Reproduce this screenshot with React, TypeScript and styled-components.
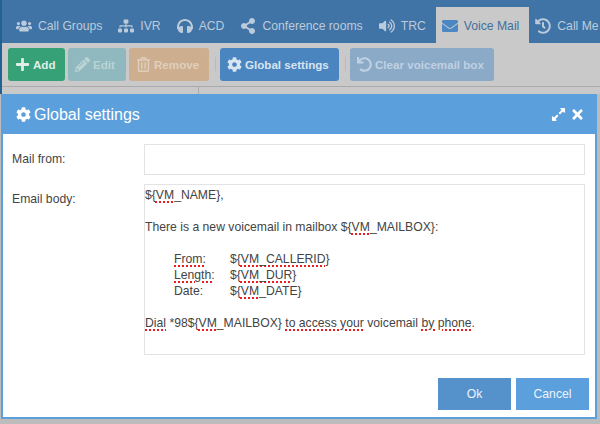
import React from "react";
import styled, { createGlobalStyle } from "styled-components";
import {
	FaUsers,
	FaSitemap,
	FaHeadphones,
	FaShareAlt,
	FaVolumeUp,
	FaEnvelope,
	FaHistory,
	FaPlus,
	FaPencilAlt,
	FaRegTrashAlt,
	FaCog,
	FaUndo,
	FaExpandAlt,
	FaTimes,
} from "react-icons/fa";

const GlobalStyle = createGlobalStyle`
	html, body {
		margin: 0;
		padding: 0;
		background: #bcbcbc;
		font-family: "Liberation Sans", Arial, sans-serif;
	}
`;

const Page = styled.div`
	position: relative;
	width: 600px;
	height: 424px;
	overflow: hidden;
	background: #bcbcbc;
`;

const Backdrop = styled.div`
	border-left: 2px solid #1f6293;
	background: #c9c9c9;
`;

const TabBar = styled.div`
	height: 43px;
	background: #4174a6;
	display: flex;
	align-items: flex-end;
	padding-left: 14px;
	box-sizing: border-box;
`;

const Tab = styled.div<{ $active?: boolean }>`
	height: 35px;
	display: flex;
	align-items: center;
	gap: 6px;
	padding: 1px 10px 0 ${(p) => (p.$active ? "6px" : "0")};
	margin-right: 6px;
	margin-left: ${(p) => (p.$active ? "-6px" : "0")};
	font-size: 12.2px;
	white-space: nowrap;
	background: ${(p) => (p.$active ? "#c9c9c9" : "transparent")};
	color: ${(p) => (p.$active ? "#40719f" : "#bccbdb")};
	svg {
		width: 16px;
		height: 16px;
		color: ${(p) => (p.$active ? "#4a87c3" : "#bccbdb")};
	}
`;

const LastTab = styled(Tab)`
	padding-right: 0;
	margin-right: 0;
`;

const Toolbar = styled.div`
	height: 44px;
	display: flex;
	align-items: flex-start;
	padding: 5px 0 0 6px;
	gap: 3px;
	box-sizing: border-box;
	border-bottom: 1px solid #aaaaaa;
`;

const ToolButton = styled.div<{ $bg: string; $fg: string; $w: number }>`
	width: ${(p) => p.$w}px;
	height: 33px;
	display: flex;
	align-items: center;
	gap: 3px;
	padding-left: 7px;
	border-radius: 3px;
	font-size: 11.6px;
	font-weight: bold;
	white-space: nowrap;
	box-sizing: border-box;
	background: ${(p) => p.$bg};
	color: ${(p) => p.$fg};
	svg {
		width: 15px;
		height: 15px;
	}
`;

const Separator = styled.div`
	width: 1px;
	height: 14px;
	margin: 9px 1px 0 3px;
	background: #bbbbbb;
`;

const TableHead = styled.div`
	height: 7px;
	width: 196px;
	border-right: 1px solid #aaaaaa;
`;

const Modal = styled.div`
	position: absolute;
	left: 1px;
	top: 94px;
	width: 596px;
	height: 325px;
	background: #ffffff;
	border: 2px solid #5b9fdc;
	border-top: 0;
	box-sizing: border-box;
	display: flex;
	flex-direction: column;
`;

const ModalHeader = styled.div`
	height: 40px;
	flex: none;
	background: #5b9fdc;
	color: #ffffff;
	display: flex;
	align-items: center;
	padding: 0 10px 0 13px;
	font-size: 16px;
	gap: 3px;
	svg {
		width: 15px;
		height: 15px;
	}
`;

const HeaderTitle = styled.div`
	flex: 1;
	padding-top: 1px;
`;

const HeaderActions = styled.div`
	display: flex;
	align-items: center;
	gap: 4px;
`;

const FormBody = styled.div`
	flex: 1;
	padding: 10px 10px 0 9px;
	display: grid;
	grid-template-columns: 132px 1fr;
	grid-template-rows: 31px 171px;
	row-gap: 9px;
`;

const FieldLabel = styled.label`
	padding-top: 8px;
	font-size: 12.2px;
	color: #444444;
`;

const Field = styled.div`
	border: 1px solid #e3e3e3;
	box-sizing: border-box;
	background: #ffffff;
`;

const BodyField = styled(Field)`
	padding: 2px 0 0 0;
	font-size: 12.2px;
	line-height: 16px;
	color: #444444;
`;

const Line = styled.div<{ $indent?: boolean }>`
	height: 16px;
	white-space: pre;
	padding-left: ${(p) => (p.$indent ? "29px" : "0")};
	display: flex;
`;

const Gap = styled.div`
	height: 16px;
`;

const Term = styled.span`
	width: 56px;
	flex: none;
`;

const Typo = styled.span`
	text-decoration: underline dotted #ee1c1c;
	text-decoration-thickness: 1.5px;
	text-underline-offset: 2px;
`;

const Footer = styled.div`
	flex: none;
	height: 39px;
	display: flex;
	justify-content: flex-end;
	gap: 5px;
	padding-right: 6px;
`;

const FootButton = styled.div<{ $bg: string }>`
	width: 73px;
	height: 32px;
	display: flex;
	align-items: center;
	justify-content: center;
	font-size: 12.2px;
	color: #eef4fb;
	background: ${(p) => p.$bg};
`;

const tabs = [
	{ icon: <FaUsers />, label: "Call Groups" },
	{ icon: <FaSitemap />, label: "IVR" },
	{ icon: <FaHeadphones />, label: "ACD" },
	{ icon: <FaShareAlt />, label: "Conference rooms" },
	{ icon: <FaVolumeUp />, label: "TRC" },
	{ icon: <FaEnvelope />, label: "Voice Mail", active: true },
];

export default function App() {
	return (
		<Page>
			<GlobalStyle />
			<Backdrop>
				<TabBar>
					{tabs.map((t) => (
						<Tab key={t.label} $active={t.active}>
							{t.icon}
							{t.label}
						</Tab>
					))}
					<LastTab>
						<FaHistory />
						Call Me
					</LastTab>
				</TabBar>
				<Toolbar>
					<ToolButton $w={57} $bg="#36a176" $fg="#dfeee8">
						<FaPlus />
						Add
					</ToolButton>
					<ToolButton $w={58} $bg="#8fb9bf" $fg="#bcd3d6">
						<FaPencilAlt />
						Edit
					</ToolButton>
					<ToolButton $w={80} $bg="#cdae8f" $fg="#e0cfbd">
						<FaRegTrashAlt />
						Remove
					</ToolButton>
					<Separator />
					<ToolButton $w={119} $bg="#4b85c0" $fg="#d8e4f0">
						<FaCog />
						Global settings
					</ToolButton>
					<Separator />
					<ToolButton $w={144} $bg="#8aaac8" $fg="#c0d1e2">
						<FaUndo />
						Clear voicemail box
					</ToolButton>
				</Toolbar>
				<TableHead />
			</Backdrop>
			<Modal>
				<ModalHeader>
					<FaCog />
					<HeaderTitle>Global settings</HeaderTitle>
					<HeaderActions>
						<FaExpandAlt />
						<FaTimes />
					</HeaderActions>
				</ModalHeader>
				<FormBody>
					<FieldLabel>Mail from:</FieldLabel>
					<Field />
					<FieldLabel>Email body:</FieldLabel>
					<BodyField>
						<Line>
							{"${"}
							<Typo>VM</Typo>
							{"_NAME},"}
						</Line>
						<Gap />
						<Line>
							{"There is a new voicemail in mailbox ${"}
							<Typo>VM</Typo>
							{"_MAILBOX}:"}
						</Line>
						<Gap />
						<Line $indent>
							<Term>
								<Typo>From:</Typo>
							</Term>
							{"${"}
							<Typo>VM_CALLERID</Typo>
							{"}"}
						</Line>
						<Line $indent>
							<Term>
								<Typo>Length:</Typo>
							</Term>
							{"${"}
							<Typo>VM_DUR</Typo>
							{"}"}
						</Line>
						<Line $indent>
							<Term>Date:</Term>
							{"${"}
							<Typo>VM</Typo>
							{"_DATE}"}
						</Line>
						<Gap />
						<Line>
							<Typo>Dial</Typo>
							{" *98${"}
							<Typo>VM</Typo>
							{"_MAILBOX} "}
							<Typo>to access your</Typo>
							{" voicemail "}
							<Typo>by phone</Typo>
							{"."}
						</Line>
					</BodyField>
				</FormBody>
				<Footer>
					<FootButton $bg="#5592cb">Ok</FootButton>
					<FootButton $bg="#5b9fdc">Cancel</FootButton>
				</Footer>
			</Modal>
		</Page>
	);
}
